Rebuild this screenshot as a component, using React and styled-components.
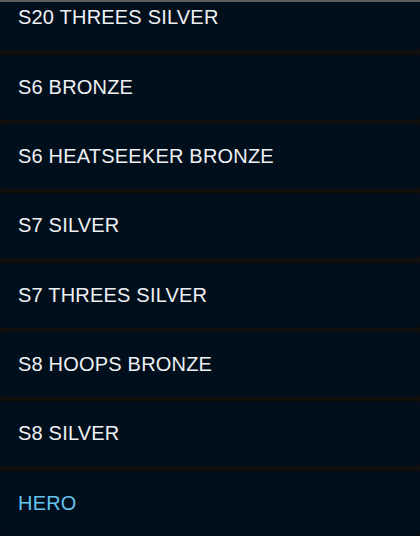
import React from "react";
import styled, { createGlobalStyle } from "styled-components";

const GlobalStyle = createGlobalStyle`
  html, body {
    margin: 0;
    padding: 0;
    background: #12110e;
  }
  * {
    box-sizing: border-box;
  }
`;

const Screen = styled.div`
  width: 420px;
  height: 536px;
  overflow: hidden;
  background: #12110e;
  display: flex;
  flex-direction: column;
`;

const TopEdge = styled.div`
  height: 2px;
  flex-shrink: 0;
  background: #5b5b5b;
  position: relative;
  z-index: 2;
`;

// scrolled list, first item partly hidden under the top edge
const List = styled.ul`
  list-style: none;
  margin: -16.6px 0 0;
  padding: 0;
  display: flex;
  flex-direction: column;
  gap: 4.33px;
`;

const Item = styled.li`
  height: 65px;
  flex-shrink: 0;
  display: flex;
  align-items: center;
  padding: 0 18px;
  background: #010f1d;
  border-radius: 4px;
  box-shadow: 0 0 2px rgba(0, 0, 0, 0.7);
  font-family: "Liberation Sans", Arial, sans-serif;
  font-size: 20px;
  letter-spacing: 0.2px;
  color: ${(props) => (props.active ? "#62c4ef" : "#eef0f2")};
  cursor: pointer;
`;

const items = [
  "S20 THREES SILVER",
  "S6 BRONZE",
  "S6 HEATSEEKER BRONZE",
  "S7 SILVER",
  "S7 THREES SILVER",
  "S8 HOOPS BRONZE",
  "S8 SILVER",
  "HERO",
];

export default function App() {
  return (
    <>
      <GlobalStyle />
      <Screen>
        <TopEdge />
        <List>
          {items.map((name) => (
            <Item key={name} active={name === "HERO"}>
              {name}
            </Item>
          ))}
        </List>
      </Screen>
    </>
  );
}
